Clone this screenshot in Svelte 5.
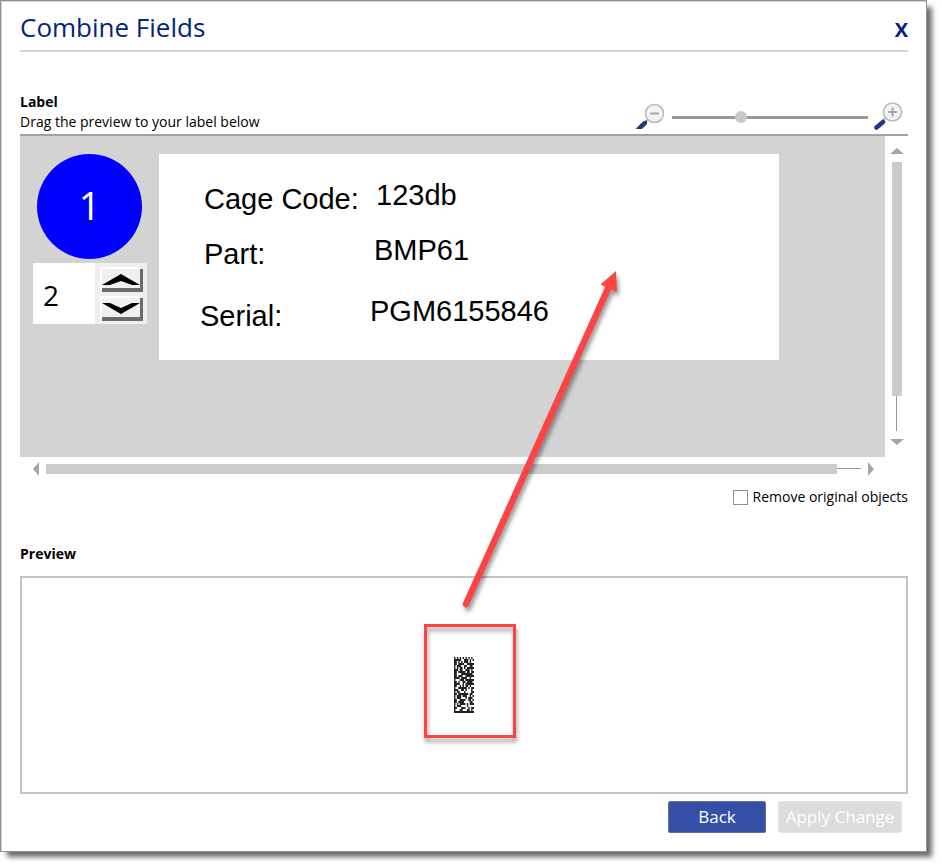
<script>
  let quantity = $state('2');
  let zoom = $state(34);
  let removeOriginals = $state(false);

  const fields = [
    { text: 'Cage Code:', x: 45, y: 29 },
    { text: '123db', x: 217, y: 25 },
    { text: 'Part:', x: 45, y: 84 },
    { text: 'BMP61', x: 215, y: 80 },
    { text: 'Serial:', x: 41, y: 146 },
    { text: 'PGM6155846', x: 211, y: 141 }
  ];

  // Data Matrix: solid left and bottom edges, dotted top and right edges.
  const cols = 14;
  const rows = 28;
  let seed = 6155846;
  const random = () => {
    seed = (seed * 1103515245 + 12345) % 2147483648;
    return seed / 2147483648;
  };
  let matrix = '';
  for (let r = 0; r < rows; r++) {
    for (let c = 0; c < cols; c++) {
      let on = random() < 0.62;
      if (c === 0 || r === rows - 1) on = true;
      else if (r === 0) on = c % 2 === 0;
      else if (c === cols - 1) on = r % 2 === 1;
      if (on) matrix += `M${c} ${r}h1v1h-1z`;
    }
  }

  function step(by) {
    quantity = String(Math.max(1, (parseInt(quantity) || 0) + by));
  }
</script>

<div class="dialog">
  <header>
    <h1>Combine Fields</h1>
    <button class="close" aria-label="Close">X</button>
  </header>

  <section>
    <div class="toolbar">
      <div class="caption">
        <h2>Label</h2>
        <p>Drag the preview to your label below</p>
      </div>
      <div class="zoom">
        <button class="icon" aria-label="Zoom out">
          <svg width="30" height="30" viewBox="0 0 30 30">
            <path d="M9.500 19.500L13 16.500" stroke="#b0b0b0" stroke-width="2" />
            <path d="M0.500 26.500L7 20L10.500 19L10.500 22L6 26.500Z" fill="#26357f" stroke="#26357f" stroke-linejoin="round" />
            <circle cx="18.500" cy="11.500" r="9" fill="#f3f3f3" stroke="#b9b9b9" stroke-width="1.500" />
            <path d="M14 11.500h9" stroke="#a6a6a6" stroke-width="2" />
          </svg>
        </button>
        <input type="range" min="0" max="100" bind:value={zoom} aria-label="Zoom" />
        <button class="icon" aria-label="Zoom in">
          <svg width="30" height="30" viewBox="0 0 30 30">
            <path d="M9 18.500L12 15.500" stroke="#b0b0b0" stroke-width="2" />
            <path d="M2.500 25.500L9 20" stroke="#26357f" stroke-width="4.500" stroke-linecap="round" />
            <circle cx="18.500" cy="10" r="9" fill="#f3f3f3" stroke="#b9b9b9" stroke-width="1.500" />
            <path d="M14 10h9M18.500 5.500v9" stroke="#a6a6a6" stroke-width="2" />
          </svg>
        </button>
      </div>
    </div>

    <div class="viewport">
      <div class="canvas">
        <div class="badge">1</div>
        <div class="spinner">
          <input type="text" bind:value={quantity} aria-label="Label number" />
          <div class="steps">
            <button aria-label="Next label" onclick={() => step(1)}>
              <svg width="38" height="14" viewBox="0 0 38 14"><path d="M0 13L19 2L38 13L30 13L19 9L8 13Z" /></svg>
            </button>
            <button aria-label="Previous label" onclick={() => step(-1)}>
              <svg width="38" height="14" viewBox="0 0 38 14"><path d="M0 2L19 13L38 2L30 2L19 7L8 2Z" /></svg>
            </button>
          </div>
        </div>
        <div class="sheet">
          {#each fields as f}
            <span style="left: {f.x}px; top: {f.y}px">{f.text}</span>
          {/each}
        </div>
      </div>
      <div class="vscroll">
        <button aria-label="Scroll up"><svg width="14" height="6"><path d="M0 6L7 0L14 6Z" /></svg></button>
        <div class="track"><div class="thumb"></div></div>
        <button aria-label="Scroll down"><svg width="14" height="6"><path d="M0 0L7 6L14 0Z" /></svg></button>
      </div>
      <div class="hscroll">
        <button aria-label="Scroll left"><svg width="6" height="14"><path d="M6 0L0 7L6 14Z" /></svg></button>
        <div class="track"><div class="thumb"></div></div>
        <button aria-label="Scroll right"><svg width="6" height="14"><path d="M0 0L6 7L0 14Z" /></svg></button>
      </div>
    </div>

    <label class="option">
      <input type="checkbox" bind:checked={removeOriginals} />
      Remove original objects
    </label>
  </section>

  <section>
    <h2 class="preview-title">Preview</h2>
    <div class="preview">
      <div class="code">
        <svg width="20" height="56" viewBox="0 0 {cols} {rows}" preserveAspectRatio="none" role="img" aria-label="Data Matrix code">
          <path d={matrix} fill="#222" />
        </svg>
        <div class="highlight"></div>
        <svg class="arrow" width="170" height="350" viewBox="0 0 170 350" aria-hidden="true">
          <path d="M6 338L150 18" stroke="#fd4444" stroke-width="6.500" stroke-linecap="round" />
          <path d="M156 5L140.500 18.500L157 26Z" fill="#fd4444" />
        </svg>
      </div>
    </div>
  </section>

  <footer>
    <button class="back">Back</button>
    <button class="apply" disabled>Apply Change</button>
  </footer>
</div>

<style>
  :global(body) {
    margin: 0;
    background: #fff;
  }
  .dialog {
    position: relative;
    box-sizing: border-box;
    margin: 0 15px 15px 0;
    padding: 0 18px 18px 19px;
    border: 1px solid #929292;
    box-shadow:
      inset 1px 1px 0 #d2d2d2,
      6px 6px 5px -1px #6c6c6c;
    background: #fff;
    font-family: 'Open Sans', 'Noto Sans', sans-serif;
    font-size: 14px;
    line-height: 20px;
    color: #000;
  }
  button {
    margin: 0;
    padding: 0;
    border: 0;
    background: none;
    font-family: inherit;
    cursor: pointer;
  }
  svg {
    display: block;
  }
  h1,
  h2,
  p {
    margin: 0;
  }
  header {
    display: flex;
    justify-content: space-between;
    align-items: flex-end;
    height: 49px;
    border-bottom: 2px solid #d6d6d6;
  }
  h1 {
    font-size: 26px;
    line-height: 46px;
    font-weight: 400;
    color: #00257f;
  }
  .close {
    padding-bottom: 8px;
    font-size: 20px;
    line-height: 24px;
    font-weight: 700;
    color: #00257f;
  }
  h2 {
    font-size: 14px;
    line-height: 20px;
    font-weight: 700;
  }
  .toolbar {
    display: flex;
    justify-content: space-between;
    align-items: flex-end;
    margin-top: 40px;
    padding-bottom: 2px;
    border-bottom: 2px solid #a0a0a0;
  }
  .zoom {
    display: flex;
    align-items: center;
    gap: 6px;
    padding-right: 4px;
  }
  input[type='range'] {
    appearance: none;
    width: 196px;
    height: 13px;
    margin: 0;
    background: linear-gradient(#999, #999) center / 100% 3px no-repeat;
  }
  input[type='range']::-webkit-slider-thumb {
    appearance: none;
    width: 12px;
    height: 12px;
    border-radius: 50%;
    background: #c9c9c9;
  }
  .viewport {
    display: grid;
    grid-template-columns: 1fr 23px;
    grid-template-rows: 321px 23px;
  }
  .canvas {
    position: relative;
    overflow: hidden;
    background: #d3d3d3;
  }
  .badge {
    position: absolute;
    left: 17px;
    top: 18px;
    width: 105px;
    height: 105px;
    border-radius: 50%;
    background: #00f;
    color: #fff;
    font-size: 38px;
    line-height: 103px;
    text-align: center;
  }
  .spinner {
    position: absolute;
    left: 13px;
    top: 127px;
    display: flex;
    width: 113px;
    height: 61px;
    background: #fff;
  }
  .spinner input {
    box-sizing: border-box;
    width: 62px;
    height: 61px;
    padding: 2px 0 0 10px;
    border: 0;
    background: #fff;
    font-family: inherit;
    font-size: 28px;
    color: #000;
  }
  .steps {
    display: flex;
    flex: 1;
    flex-direction: column;
    gap: 6px;
    padding: 6px 4px 3px 7px;
    background: #eee;
  }
  .steps button {
    flex: 1;
    overflow: hidden;
    border: solid #6b6b6b;
    border-width: 0 3px 4px 0;
    background: #f0f0f0;
    box-shadow: -2px -2px 0 #fff;
  }
  .sheet {
    position: absolute;
    left: 139px;
    top: 18px;
    width: 620px;
    height: 206px;
    background: #fff;
    font-family: 'Liberation Sans', Arial, sans-serif;
    font-size: 29px;
    line-height: 32px;
  }
  .sheet span {
    position: absolute;
    white-space: nowrap;
  }
  .vscroll,
  .hscroll {
    display: flex;
    align-items: center;
    fill: #a6a6a6;
  }
  .vscroll {
    flex-direction: column;
    gap: 8px;
    padding: 12px 0;
  }
  .hscroll {
    gap: 7px;
    padding: 0 11px 0 13px;
  }
  .track {
    display: flex;
    flex: 1;
  }
  .vscroll .track {
    width: 10px;
    background: linear-gradient(#999, #999) center / 1px 100% no-repeat;
  }
  .hscroll .track {
    height: 10px;
    background: linear-gradient(#999, #999) center / 100% 1px no-repeat;
  }
  .thumb {
    background: #cbcbcb;
  }
  .vscroll .thumb {
    width: 10px;
    height: 87%;
  }
  .hscroll .thumb {
    width: 97%;
    height: 10px;
  }
  .option {
    display: flex;
    justify-content: flex-end;
    align-items: center;
    gap: 5px;
    margin-top: 7px;
  }
  .option input {
    appearance: none;
    box-sizing: border-box;
    width: 15px;
    height: 15px;
    margin: 0;
    border: 1px solid #8e8e8e;
    background: #fff;
  }
  .option input:checked {
    background: #344fa5;
  }
  .preview-title {
    margin-top: 37px;
  }
  .preview {
    display: flex;
    justify-content: center;
    align-items: center;
    box-sizing: border-box;
    height: 218px;
    margin-top: 12px;
    border: 2px solid #c3c3c3;
  }
  .code {
    position: relative;
  }
  .highlight {
    position: absolute;
    left: -30px;
    top: -33px;
    box-sizing: border-box;
    width: 92px;
    height: 114px;
    border: 3px solid #fd4444;
    filter: drop-shadow(1px 4px 2px rgba(0, 0, 0, 0.4));
  }
  .arrow {
    position: absolute;
    left: 6px;
    top: -391px;
    overflow: visible;
    pointer-events: none;
    filter: drop-shadow(2px 4px 2px rgba(0, 0, 0, 0.4));
  }
  footer {
    display: flex;
    justify-content: flex-end;
    gap: 12px;
    margin-top: 7px;
    padding-right: 6px;
  }
  footer button {
    height: 32px;
    font-size: 17px;
    line-height: 24px;
    color: #fff;
    border: 1px solid #e4e4e4;
    border-radius: 2px;
  }
  .back {
    width: 98px;
    background: #344fa5;
    border-color: #6a6f86;
  }
  .apply {
    width: 124px;
    background: #dcdcdc;
    cursor: default;
  }
</style>
